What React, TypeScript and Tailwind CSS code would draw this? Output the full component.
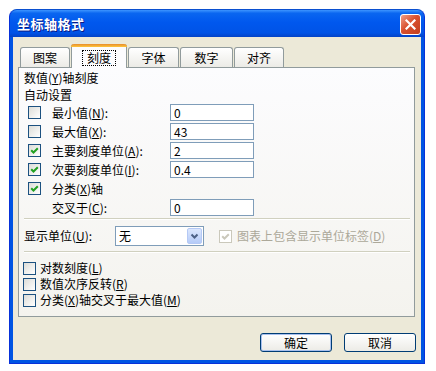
import React from "react";

const font = { fontFamily: '"Noto Sans CJK SC", "Noto Sans", sans-serif' };

function M({ l }: { l: string }) {
  return (
    <span>
      (<span className="underline underline-offset-1">{l}</span>)
    </span>
  );
}

function Check({ checked, disabled }: { checked?: boolean; disabled?: boolean }) {
  return (
    <div
      className={
        "w-[13px] h-[13px] shrink-0 border flex items-center justify-center " +
        (disabled
          ? "border-[#CAC8BB] bg-white"
          : "border-[#1C5180] bg-[linear-gradient(135deg,#DCDCD7,#FFFFFF)]")
      }
    >
      {checked && (
        <svg width="9" height="9" viewBox="0 0 9 9">
          <path
            d="M1.2 4.2 L3.5 6.5 L7.8 2.2"
            stroke={disabled ? "#CAC8BB" : "#21A121"}
            strokeWidth="2"
            fill="none"
          />
        </svg>
      )}
    </div>
  );
}

function Input({ v }: { v: string }) {
  return (
    <div className="w-[84px] h-[17px] border border-[#7F9DB9] bg-white pl-[3px] text-[12px] leading-[15px] text-black">
      {v}
    </div>
  );
}

function Row({
  checked,
  box = true,
  label,
  value,
}: {
  checked?: boolean;
  box?: boolean;
  label: React.ReactNode;
  value?: string;
}) {
  return (
    <div className="h-[19px] flex items-center pl-[4px]">
      <div className="w-[13px] flex items-center">{box && <Check checked={checked} />}</div>
      <div className="w-[129px] pl-[11px] text-[12px] whitespace-nowrap">{label}</div>
      {value !== undefined && <Input v={value} />}
    </div>
  );
}

function Sep() {
  return (
    <div className="mr-[4px]">
      <div className="h-[1px] bg-[#D0D0BF]" />
      <div className="h-[1px] bg-white" />
    </div>
  );
}

function Tab({ label, w, active }: { label: string; w: string; active?: boolean }) {
  if (active) {
    return (
      <div
        className={
          w +
          " relative z-10 -mb-[1px] -mt-[2px] h-[24px] rounded-t-[3px] border-x border-[#919B9C] bg-[#FCFCFE] flex flex-col"
        }
      >
        <div className="h-[3px] rounded-t-[3px] bg-[linear-gradient(#E68B2C,#FFC73C)] -mx-[1px]" />
        <div className="flex-1 flex items-center justify-center">
          <span className="px-[4px] leading-[14px] border border-dotted border-black text-[12px]">{label}</span>
        </div>
      </div>
    );
  }
  return (
    <div
      className={
        w +
        " h-[20px] rounded-t-[3px] border border-b-0 border-[#919B9C] bg-[linear-gradient(#FFFFFF,#ECEBE6)] flex items-center justify-center text-[12px]"
      }
    >
      {label}
    </div>
  );
}

export default function App() {
  return (
    <div className="w-[436px] h-[371px] bg-white pt-[9px] pl-[9px] text-black" style={font}>
      <div className="w-[416px] h-[355px] rounded-t-[8px] bg-[#0054E3] border border-[#0831D9] border-t-[#0A4FD0] flex flex-col overflow-hidden">
        {/* title bar */}
        <div className="h-[27px] shrink-0 bg-[linear-gradient(#3D95FF_0%,#0A66F0_12%,#0058EE_45%,#0053E6_85%,#0343C6_100%)] flex items-center justify-between pl-[7px] pr-[3px]">
          <span className="text-white font-bold text-[13px] [text-shadow:1px_1px_#0A1883] tracking-[0.5px]">
            坐标轴格式
          </span>
          <div className="w-[21px] h-[21px] mt-[2px] rounded-[3px] border border-white bg-[linear-gradient(135deg,#F0A08A,#D9512F_45%,#C23E1E)] flex items-center justify-center">
            <svg width="11" height="11" viewBox="0 0 11 11">
              <path d="M1.5 1.5 L9.5 9.5 M9.5 1.5 L1.5 9.5" stroke="white" strokeWidth="2.2" strokeLinecap="square" />
            </svg>
          </div>
        </div>
        {/* body */}
        <div className="mx-[3px] mb-[3px] h-[324px] bg-[#ECE9D8] flex flex-col pt-[9px] pl-[5px] pr-[6px]">
          {/* tabs */}
          <div className="h-[21px] flex items-end gap-[1px] pl-[2px]">
            <Tab label="图案" w="w-[50px]" />
            <Tab label="刻度" w="w-[56px]" active />
            <Tab label="字体" w="w-[51px]" />
            <Tab label="数字" w="w-[53px]" />
            <Tab label="对齐" w="w-[50px]" />
          </div>
          {/* panel */}
          <div className="h-[250px] border border-[#919B9C] bg-[linear-gradient(#FCFCFE,#F4F3EE)] pl-[5px] pt-[1px] text-[12px]">
            <div className="h-[17px] flex items-center">
              数值<M l="Y" />轴刻度
            </div>
            <div className="h-[17px] flex items-center">自动设置</div>
            <Row label={<>最小值<M l="N" />:</>} value="0" />
            <Row label={<>最大值<M l="X" />:</>} value="43" />
            <Row checked label={<>主要刻度单位<M l="A" />:</>} value="2" />
            <Row checked label={<>次要刻度单位<M l="I" />:</>} value="0.4" />
            <Row checked label={<>分类<M l="X" />轴</>} />
            <Row box={false} label={<>交叉于<M l="C" />:</>} value="0" />
            <div className="mt-[1px]">
              <Sep />
            </div>
            <div className="mt-[6px] h-[20px] flex items-center">
              <div className="w-[91px]">
                显示单位<M l="U" />:
              </div>
              <div className="w-[89px] h-[20px] border border-[#7F9DB9] bg-white flex items-center justify-between pl-[3px] pr-[1px]">
                <span>无</span>
                <div className="w-[15px] h-[16px] rounded-[2px] border border-[#B5C9F5] bg-[linear-gradient(#DCE7FD,#B5CBF8)] flex items-center justify-center">
                  <svg width="9" height="7" viewBox="0 0 9 7">
                    <path d="M1.5 1.5 L4.5 4.5 L7.5 1.5" stroke="#4D6185" strokeWidth="2" fill="none" />
                  </svg>
                </div>
              </div>
              <div className="ml-[15px]">
                <Check checked disabled />
              </div>
              <span className="ml-[5px] text-[#ACA899]">
                图表上包含显示单位标签<M l="D" />
              </span>
            </div>
            <div className="mt-[5px]">
              <Sep />
            </div>
            <div className="mt-[7px] flex flex-col -ml-[1px]">
              <div className="h-[16px] flex items-center gap-[4px]">
                <Check />
                <span>
                  对数刻度<M l="L" />
                </span>
              </div>
              <div className="h-[16px] flex items-center gap-[4px]">
                <Check />
                <span>
                  数值次序反转<M l="R" />
                </span>
              </div>
              <div className="h-[16px] flex items-center gap-[4px]">
                <Check />
                <span>
                  分类<M l="X" />轴交叉于最大值<M l="M" />
                </span>
              </div>
            </div>
          </div>
          {/* buttons */}
          <div className="mt-[16px] flex justify-end gap-[12px]">
            <div className="w-[72px] h-[19px] rounded-[3px] border border-[#003C74] bg-[linear-gradient(#FFFFFF,#ECEBE6)] shadow-[inset_0_0_0_1px_#A8C0EE] flex items-center justify-center text-[12px]">
              确定
            </div>
            <div className="w-[72px] h-[19px] rounded-[3px] border border-[#003C74] bg-[linear-gradient(#FFFFFF,#ECEBE6)] flex items-center justify-center text-[12px] -mr-[1px]">
              取消
            </div>
          </div>
        </div>
      </div>
    </div>
  );
}
